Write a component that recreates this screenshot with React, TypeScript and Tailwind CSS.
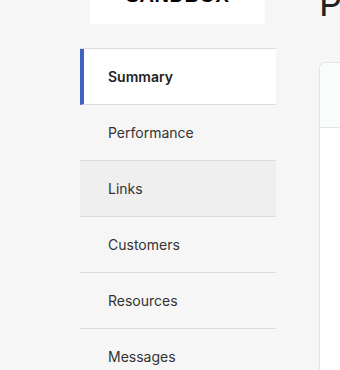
import React from "react";

const items = ["Summary", "Performance", "Links", "Customers", "Resources", "Messages"];

export default function App() {
  return (
    <div className="h-[370px] w-[340px] overflow-hidden bg-[#f6f6f6]" style={{ fontFamily: "Inter, 'Liberation Sans', sans-serif" }}>
      <div className="flex -mt-[19px]">
        <aside className="w-[196px] ml-[80px] shrink-0 flex flex-col">
          <div className="ml-[10px] w-[175px] h-[43px] bg-white flex items-end justify-center pb-[19px]">
            <span className="text-[20px] font-bold leading-none text-black tracking-[0.5px]" style={{ fontFamily: "'Liberation Sans', Arial, sans-serif" }}>SANDBOX</span>
          </div>
          <nav className="mt-[24px] border-t border-[#dcdcdc]">
            {items.map((it, i) => (
              <div
                key={it}
                className={
                  i === 0
                    ? "h-[56px] flex items-center bg-white border-b border-[#dcdcdc] border-l-4 border-l-[#3f62c4] pl-[24px] text-[14px] font-semibold text-[#222]"
                    : i === 2
                    ? "h-[56px] flex items-center bg-[#efefef] border-b border-[#dcdcdc] pl-[28px] text-[14px] text-[#333]"
                    : "h-[56px] flex items-center border-b border-[#dcdcdc] pl-[28px] text-[14px] text-[#333]"
                }
              >
                {it}
              </div>
            ))}
          </nav>
        </aside>
        <main className="ml-[43px] flex-1 min-w-0 flex flex-col">
          <h1 className="text-[36px] leading-none pt-[4px] font-normal text-[#222] whitespace-nowrap">Performance</h1>
          <div className="mt-[41px] rounded-tl-[6px] border-l border-t border-[#e4e4e4] bg-white h-[400px]">
            <div className="h-[65px] rounded-tl-[6px] bg-[#fafbfb] border-b border-[#e4e4e4]" />
          </div>
        </main>
      </div>
    </div>
  );
}
